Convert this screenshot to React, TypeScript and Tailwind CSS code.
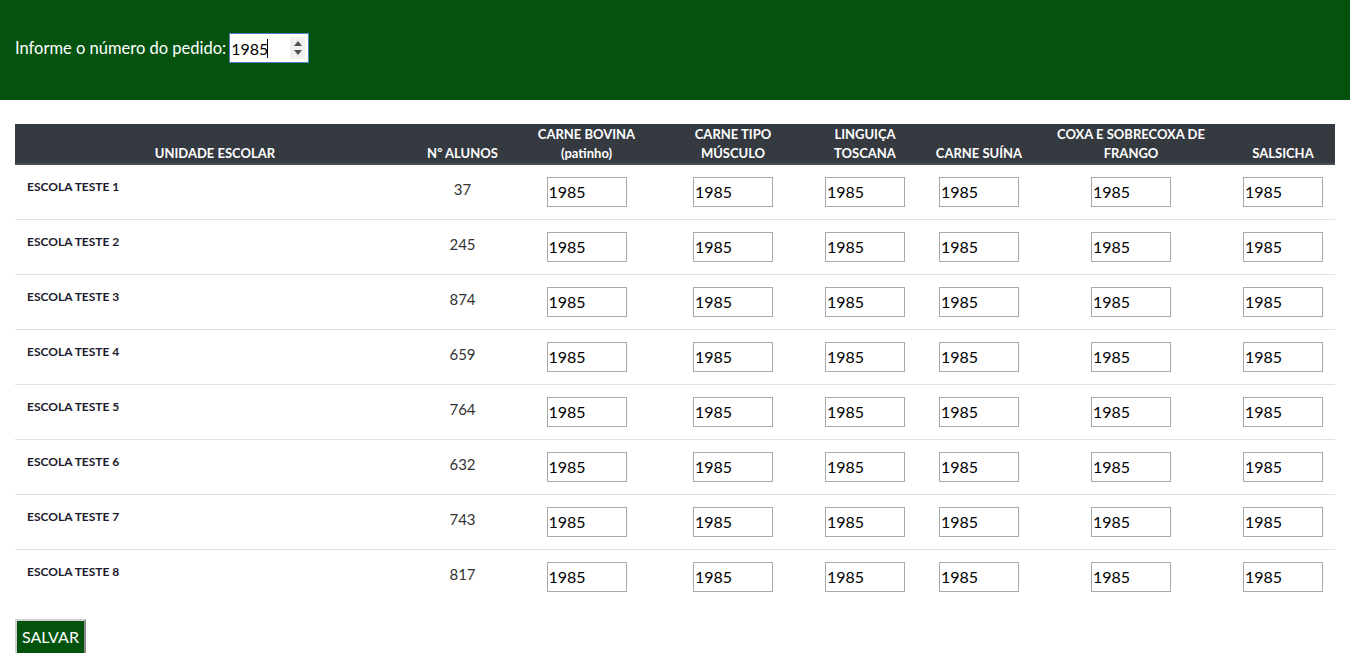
import { useState } from "react";

const columns = [
  { label: ["UNIDADE ESCOLAR"], width: "w-[400px]" },
  { label: ["Nº ALUNOS"], width: "w-[95px]" },
  { label: ["CARNE BOVINA", "(patinho)"], width: "w-[153px]" },
  { label: ["CARNE TIPO", "MÚSCULO"], width: "w-[140px]" },
  { label: ["LINGUIÇA", "TOSCANA"], width: "w-[124px]" },
  { label: ["CARNE SUÍNA"], width: "w-[104px]" },
  { label: ["COXA E SOBRECOXA DE", "FRANGO"], width: "w-[200px]" },
  { label: ["SALSICHA"], width: "w-[104px]" },
];

const escolas = [
  { nome: "ESCOLA TESTE 1", alunos: 37 },
  { nome: "ESCOLA TESTE 2", alunos: 245 },
  { nome: "ESCOLA TESTE 3", alunos: 874 },
  { nome: "ESCOLA TESTE 4", alunos: 659 },
  { nome: "ESCOLA TESTE 5", alunos: 764 },
  { nome: "ESCOLA TESTE 6", alunos: 632 },
  { nome: "ESCOLA TESTE 7", alunos: 743 },
  { nome: "ESCOLA TESTE 8", alunos: 817 },
];

export default function App() {
  const [pedido, setPedido] = useState("1985");

  return (
    <main className="min-h-screen bg-white font-['Lato','Liberation_Sans',sans-serif] text-[#212529]">
      <header className="flex h-[100px] items-center bg-[#03530f] px-[15px] pb-[4px]">
        <label className="text-[16.5px] text-white">Informe o número do pedido:</label>
        <div className="relative ml-[3px] h-[30px] w-[80px] border border-[#4f7fbf] bg-white">
          <input
            type="text"
            value={pedido}
            onChange={(e) => setPedido(e.target.value)}
            className="h-full w-full pl-[1px] text-[16px] text-black outline-none"
          />
          <span className="absolute left-[37px] top-[5px] h-[19px] w-px bg-black" />
          <div className="absolute right-[3px] top-[3px] flex h-[22px] w-[15px] flex-col items-center justify-center gap-[4px] bg-[#f0f0f0]">
            <svg width="8" height="5" viewBox="0 0 8 5">
              <path d="M0 5 L4 0 L8 5 Z" fill="#505050" />
            </svg>
            <svg width="8" height="5" viewBox="0 0 8 5">
              <path d="M0 0 L4 5 L8 0 Z" fill="#505050" />
            </svg>
          </div>
        </div>
      </header>

      <section className="mx-[15px] mt-[24px]">
        <table className="w-[1320px] table-fixed border-collapse">
          <thead>
            <tr className="bg-[#343a40]">
              {columns.map((c) => (
                <th
                  key={c.label.join(" ")}
                  className={`${c.width} border-b-2 border-[#454d55] px-1 pt-[1px] text-center align-bottom text-[13px] font-bold leading-[19px] text-white`}
                >
                  {c.label.map((l) => (
                    <div key={l}>{l}</div>
                  ))}
                </th>
              ))}
            </tr>
          </thead>
          <tbody>
            {escolas.map((e, i) => (
              <tr key={e.nome} className={i > 0 ? "border-t border-[#dee2e6]" : ""}>
                <td className="px-3 pt-[13px] align-top text-[12px] font-bold leading-[18px] text-[#1a1a2e]">
                  {e.nome}
                </td>
                <td className="pt-[12px] text-center align-top text-[15px] leading-[24px] text-[#333]">
                  {e.alunos}
                </td>
                {[0, 1, 2, 3, 4, 5].map((k) => (
                  <td key={k} className="py-[12px] text-center align-top">
                    <input
                      type="text"
                      defaultValue="1985"
                      className="h-[30px] w-[80px] border border-[#a9a9a9] pl-[1px] pb-[1px] text-[16px] text-black outline-none"
                    />
                  </td>
                ))}
              </tr>
            ))}
          </tbody>
        </table>
      </section>

      <div className="mx-[15px] mt-[15px]">
        <button className="border-2 border-[#d0d0d0] border-r-[#8c8c8c] bg-[#03530f] px-[5px] py-[4px] text-[16px] text-white">
          SALVAR
        </button>
      </div>
    </main>
  );
}
